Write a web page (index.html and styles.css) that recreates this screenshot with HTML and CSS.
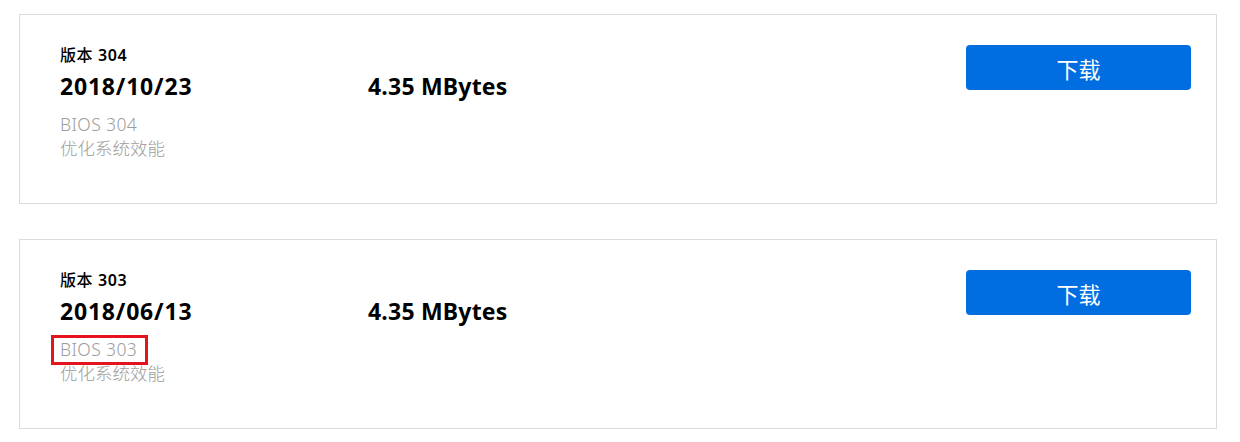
FILE: index.html
```html
<!DOCTYPE html>
<html lang="zh-CN">
<head>
<meta charset="utf-8">
<link rel="stylesheet" href="styles.css">
</head>
<body>
<div class="list">
  <div class="card">
    <div class="info">
      <div class="version"><span class="vlabel">版本</span> 304</div>
      <div class="date">2018/10/23</div>
      <div class="desc"><span class="title">BIOS 304</span><br>优化系统效能</div>
    </div>
    <div class="size">4.35 MBytes</div>
    <button class="dl">下载</button>
  </div>
  <div class="card">
    <div class="info">
      <div class="version"><span class="vlabel">版本</span> 303</div>
      <div class="date">2018/06/13</div>
      <div class="desc"><span class="title marked">BIOS 303</span><br>优化系统效能</div>
    </div>
    <div class="size">4.35 MBytes</div>
    <button class="dl">下载</button>
  </div>
</div>
</body>
</html>
```
FILE: styles.css
```css
html, body {
  margin: 0;
  padding: 0;
  background: #fff;
}
body {
  font-family: "Noto Sans", "Noto Sans CJK SC", sans-serif;
  color: #000;
}
.list {
  padding: 14px 23px 0 19px;
  display: flex;
  flex-direction: column;
  gap: 35px;
}
.card {
  border: 1px solid #dcdcdc;
  padding: 30px 25px 0 40px;
  box-sizing: border-box;
  height: 190px;
  display: flex;
  align-items: flex-start;
}
.info {
  width: 308px;
}
.version {
  font-size: 16px;
  line-height: 20px;
  font-weight: 600;
  letter-spacing: 0.6px;
}
.vlabel {
  font-weight: 500;
}
.date {
  font-size: 23px;
  line-height: 30px;
  font-weight: 700;
  letter-spacing: 0.8px;
  margin-top: 6px;
}
.desc {
  margin-top: 11px;
  font-size: 17.5px;
  line-height: 24px;
  font-weight: 300;
  color: #9d9d9d;
}
.title {
  position: relative;
  letter-spacing: 0.4px;
}
.marked::after {
  content: "";
  position: absolute;
  left: -9px;
  right: -11px;
  top: -2px;
  bottom: -4px;
  border: 3px solid #e5131d;
}
.size {
  margin-top: 26px;
  font-size: 23px;
  line-height: 30px;
  font-weight: 700;
  letter-spacing: 0.2px;
}
.dl {
  margin-left: auto;
  width: 225px;
  height: 45px;
  border: none;
  border-radius: 4px;
  background: #006ee0;
  color: #fff;
  font-family: "Noto Sans CJK SC", sans-serif;
  font-size: 22px;
  padding: 0;
  cursor: pointer;
}
```
